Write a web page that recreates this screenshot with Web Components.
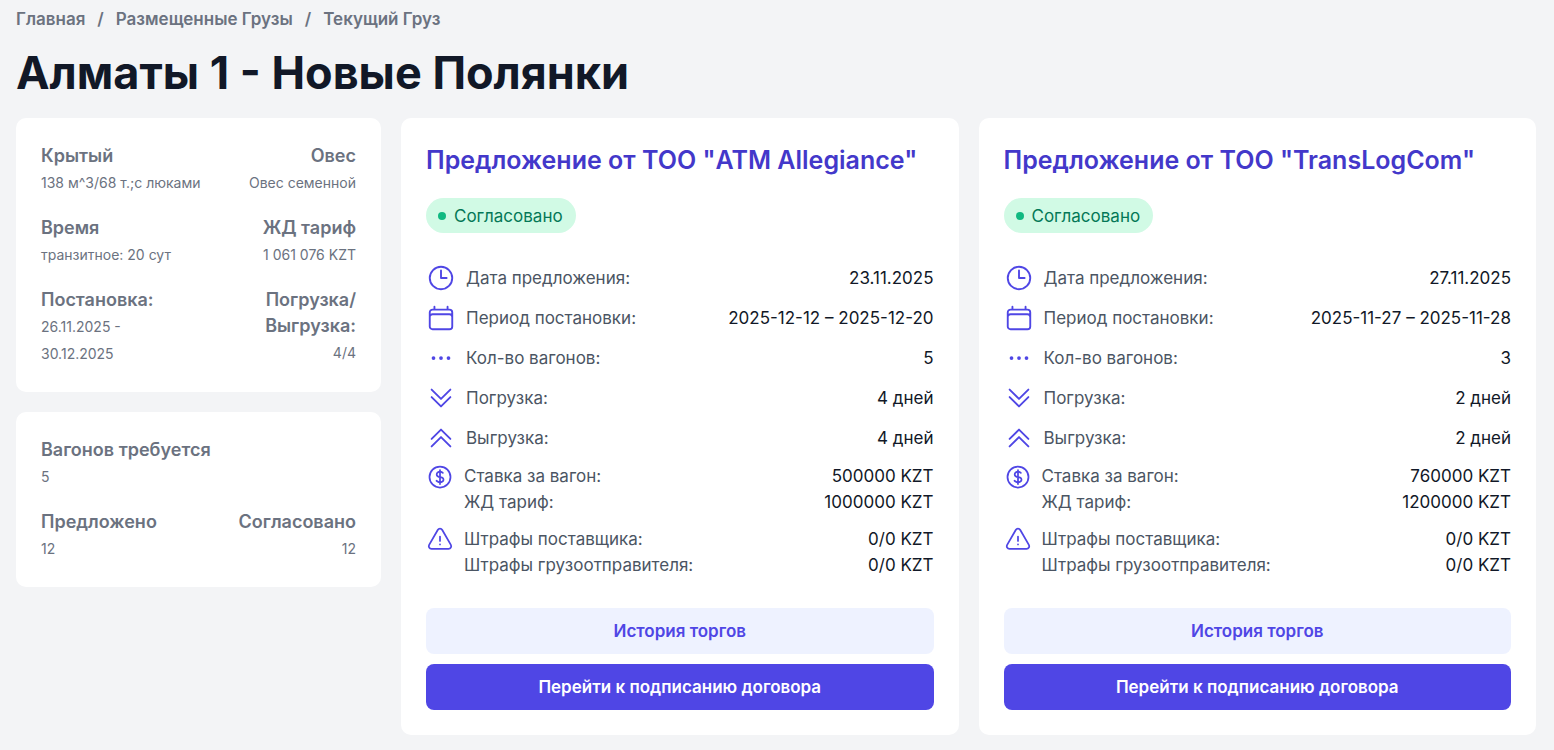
<!DOCTYPE html>
<html lang="ru">
<head>
<meta charset="utf-8">
<meta name="viewport" content="width=device-width, initial-scale=1">
<title>Алматы 1 - Новые Полянки</title>
<style>
  body {
    margin: 0;
    background: #f3f4f6;
    color: #111827;
    font: 400 17px/26px Inter, "Noto Sans", sans-serif;
  }
</style>
</head>
<body>
<cargo-page>
  <bread-crumbs slot="crumbs">
    <a href="#home">Главная</a>
    <a href="#cargos">Размещенные Грузы</a>
    <a href="#current">Текущий Груз</a>
  </bread-crumbs>
  <span slot="title">Алматы 1 - Новые Полянки</span>

  <info-card slot="side">
    <info-pair><span slot="term">Крытый</span>138 м^3/68 т.;с люками</info-pair>
    <info-pair end><span slot="term">Овес</span>Овес семенной</info-pair>
    <info-pair><span slot="term">Время</span>транзитное: 20 сут</info-pair>
    <info-pair end><span slot="term">ЖД тариф</span>1 061 076 KZT</info-pair>
    <info-pair><span slot="term">Постановка:</span>26.11.2025 -<br>30.12.2025</info-pair>
    <info-pair end><span slot="term">Погрузка/<br>Выгрузка:</span>4/4</info-pair>
  </info-card>
  <info-card slot="side">
    <info-pair wide><span slot="term">Вагонов требуется</span>5</info-pair>
    <info-pair><span slot="term">Предложено</span>12</info-pair>
    <info-pair end><span slot="term">Согласовано</span>12</info-pair>
  </info-card>

  <offer-card>
    <span slot="title">Предложение от ТОО "ATM Allegiance"</span>
    <status-badge slot="status">Согласовано</status-badge>
    <offer-row icon="clock" lines="Дата предложения:|23.11.2025"></offer-row>
    <offer-row icon="calendar" lines="Период постановки:|2025-12-12 – 2025-12-20"></offer-row>
    <offer-row icon="dots" lines="Кол-во вагонов:|5"></offer-row>
    <offer-row icon="down" lines="Погрузка:|4 дней"></offer-row>
    <offer-row icon="up" lines="Выгрузка:|4 дней"></offer-row>
    <offer-row multi icon="dollar" lines="Ставка за вагон:|500000 KZT;ЖД тариф:|1000000 KZT"></offer-row>
    <offer-row multi icon="warning" lines="Штрафы поставщика:|0/0 KZT;Штрафы грузоотправителя:|0/0 KZT"></offer-row>
    <action-button slot="actions">История торгов</action-button>
    <action-button slot="actions" primary>Перейти к подписанию договора</action-button>
  </offer-card>
  <offer-card>
    <span slot="title">Предложение от ТОО "TransLogCom"</span>
    <status-badge slot="status">Согласовано</status-badge>
    <offer-row icon="clock" lines="Дата предложения:|27.11.2025"></offer-row>
    <offer-row icon="calendar" lines="Период постановки:|2025-11-27 – 2025-11-28"></offer-row>
    <offer-row icon="dots" lines="Кол-во вагонов:|3"></offer-row>
    <offer-row icon="down" lines="Погрузка:|2 дней"></offer-row>
    <offer-row icon="up" lines="Выгрузка:|2 дней"></offer-row>
    <offer-row multi icon="dollar" lines="Ставка за вагон:|760000 KZT;ЖД тариф:|1200000 KZT"></offer-row>
    <offer-row multi icon="warning" lines="Штрафы поставщика:|0/0 KZT;Штрафы грузоотправителя:|0/0 KZT"></offer-row>
    <action-button slot="actions">История торгов</action-button>
    <action-button slot="actions" primary>Перейти к подписанию договора</action-button>
  </offer-card>
</cargo-page>

<script>
const define = (name, html, setup) => {
  const template = document.createElement('template');
  template.innerHTML = html;
  customElements.define(name, class extends HTMLElement {
    constructor() {
      super();
      this.attachShadow({ mode: 'open' }).append(template.content.cloneNode(true));
    }
    connectedCallback() { if (setup) setup(this, this.shadowRoot); }
  });
};

define('cargo-page', `
<style>
  :host { display: block; padding: 6px 18px 15px 16px; }
  h1 { margin: 16px 0 20px; font-size: 45px; line-height: 50px; font-weight: 700; }
  .layout { display: grid; grid-template-columns: repeat(4, minmax(0, 1fr)); gap: 20px; align-items: start; }
  aside { display: grid; gap: 20px; }
  .offers { grid-column: span 3; display: grid; grid-template-columns: repeat(2, minmax(0, 1fr)); gap: 20px; }
  @media (max-width: 1000px) {
    .layout { grid-template-columns: 1fr; }
    .offers { grid-column: auto; grid-template-columns: 1fr; }
  }
</style>
<slot name="crumbs"></slot>
<main>
  <h1><slot name="title"></slot></h1>
  <div class="layout">
    <aside><slot name="side"></slot></aside>
    <section class="offers"><slot></slot></section>
  </div>
</main>`);

define('bread-crumbs', `
<style>
  :host { display: block; color: #6b7280; font-weight: 600; }
  nav { display: flex; flex-wrap: wrap; gap: 12px; }
  a { color: inherit; text-decoration: none; }
  a:hover { color: #4338ca; }
</style>
<nav aria-label="Навигация"></nav>`, (host, root) => {
  const nav = root.querySelector('nav');
  nav.replaceChildren();
  host.querySelectorAll('a').forEach((link, i) => {
    if (i) {
      const slash = document.createElement('span');
      slash.textContent = '/';
      nav.append(slash);
    }
    nav.append(link.cloneNode(true));
  });
});

define('info-card', `
<style>
  :host { display: block; padding: 25px; border-radius: 10px; background: #fff; }
  .grid { display: grid; grid-template-columns: 1fr auto; gap: 19px 10px; }
</style>
<div class="grid"><slot></slot></div>`);

define('info-pair', `
<style>
  :host { display: block; color: #6b7280; }
  :host([end]) { text-align: right; }
  :host([wide]) { grid-column: 1 / -1; }
  dl, dd { margin: 0; }
  dt { font-size: 18px; font-weight: 600; }
  dd span { font-size: 14px; }
</style>
<dl><dt><slot name="term"></slot></dt><dd><span><slot></slot></span></dd></dl>`);

define('offer-card', `
<style>
  :host { display: block; padding: 25px; border-radius: 10px; background: #fff; }
  h2 { margin: 0 0 20px; font-size: 25px; line-height: 35px; font-weight: 600; color: #4338ca; }
  .rows { display: grid; gap: 10px; margin: 30px 0 29px; }
  .actions { display: grid; gap: 10px; }
</style>
<h2><slot name="title"></slot></h2>
<slot name="status"></slot>
<div class="rows"><slot></slot></div>
<div class="actions"><slot name="actions"></slot></div>`);

define('status-badge', `
<style>
  :host { display: flex; align-items: center; gap: 8px; width: fit-content; height: 35px; padding: 0 13px 0 12px;
    box-sizing: border-box; border-radius: 18px; background: #d1fae5; color: #047857; }
  i { width: 8px; height: 8px; border-radius: 50%; background: #10b981; }
</style>
<i></i><span><slot></slot></span>`);

const icons = {
  clock: 'M12 6v6h4.5M21 12a9 9 0 1 1-18 0 9 9 0 0 1 18 0z',
  calendar: 'M6.75 3v2.25M17.25 3v2.25M3 18.75V7.5a2.25 2.25 0 0 1 2.25-2.25h13.5A2.25 2.25 0 0 1 21 7.5v11.25m-18 0A2.25 2.25 0 0 0 5.25 21h13.5A2.25 2.25 0 0 0 21 18.75m-18 0v-7.5A2.25 2.25 0 0 1 5.25 9h13.5A2.25 2.25 0 0 1 21 11.25v7.5',
  dots: 'M6.75 12a.75.75 0 1 1-1.5 0 .75.75 0 0 1 1.5 0zM12.75 12a.75.75 0 1 1-1.5 0 .75.75 0 0 1 1.5 0zM18.75 12a.75.75 0 1 1-1.5 0 .75.75 0 0 1 1.5 0z',
  down: 'M19.5 5.25l-7.5 7.5-7.5-7.5m15 6l-7.5 7.5-7.5-7.5',
  up: 'M4.5 12.75l7.5-7.5 7.5 7.5m-15 6l7.5-7.5 7.5 7.5',
  dollar: 'M12 6v12m-3-2.818l.879.659c1.171.879 3.07.879 4.242 0 1.172-.879 1.172-2.303 0-3.182C13.536 12.219 12.768 12 12 12c-.725 0-1.45-.22-2.003-.659-1.106-.879-1.106-2.303 0-3.182s2.9-.879 4.006 0l.415.33M21 12a9 9 0 1 1-18 0 9 9 0 0 1 18 0z',
  warning: 'M12 9v3.75m-9.303 3.376c-.866 1.5.217 3.374 1.948 3.374h14.71c1.73 0 2.813-1.874 1.948-3.374L13.949 3.378c-.866-1.5-3.032-1.5-3.898 0L2.697 16.126zM12 15.75h.007v.008H12v-.008z'
};

define('offer-row', `
<style>
  :host { display: flex; align-items: center; gap: 10px; min-height: 30px; }
  :host([multi]) { align-items: flex-start; min-height: 53px; }
  svg { flex: none; width: 30px; height: 30px; fill: none; stroke: #4f46e5; stroke-width: 1.5;
    stroke-linecap: round; stroke-linejoin: round; }
  :host([multi]) svg { width: 28px; height: 28px; }
  dl { flex: 1; margin: 0; }
  .line { display: flex; justify-content: space-between; gap: 10px; }
  dt { color: #4b5563; }
  dd { margin: 0; text-align: right; color: #111827; }
</style>
<svg viewBox="0 0 24 24" aria-hidden="true"><path/></svg>
<dl></dl>`, (host, root) => {
  root.querySelector('path').setAttribute('d', icons[host.getAttribute('icon')]);
  root.querySelector('dl').replaceChildren(...host.getAttribute('lines').split(';').map(line => {
    const [label, value] = line.split('|');
    const box = document.createElement('div');
    const dt = document.createElement('dt');
    const dd = document.createElement('dd');
    box.className = 'line';
    dt.textContent = label;
    dd.textContent = value;
    box.append(dt, dd);
    return box;
  }));
});

define('action-button', `
<style>
  :host { display: block; }
  button { display: block; width: 100%; margin: 0; padding: 10px; border: 0; border-radius: 8px;
    font: inherit; font-weight: 600; background: #eef2ff; color: #4f46e5; cursor: pointer; }
  :host([primary]) button { background: #4f46e5; color: #fff; }
</style>
<button type="button"><slot></slot></button>`);
</script>
</body>
</html>
